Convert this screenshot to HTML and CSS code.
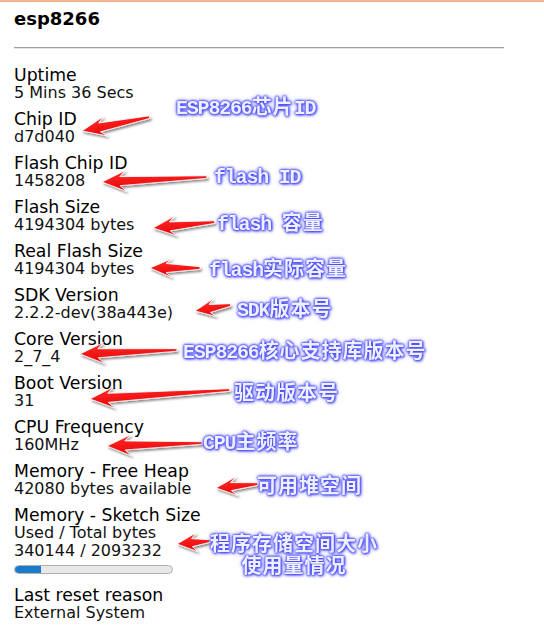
FILE: index.html
```html
<!DOCTYPE html>
<html>
<head>
<meta charset="utf-8">
<link rel="stylesheet" href="styles.css">
</head>
<body>
<div class="page">
  <div class="topline"></div>
  <div class="content">
    <h1 class="title">esp8266</h1>
    <hr class="rule">
    <div class="list">
      <div class="item"><div class="label">Uptime</div><div class="value">5 Mins 36 Secs</div></div>
      <div class="item"><div class="label">Chip ID</div><div class="value">d7d040</div></div>
      <div class="item"><div class="label">Flash Chip ID</div><div class="value">1458208</div></div>
      <div class="item"><div class="label">Flash Size</div><div class="value">4194304 bytes</div></div>
      <div class="item"><div class="label">Real Flash Size</div><div class="value">4194304 bytes</div></div>
      <div class="item"><div class="label">SDK Version</div><div class="value">2.2.2-dev(38a443e)</div></div>
      <div class="item"><div class="label">Core Version</div><div class="value">2_7_4</div></div>
      <div class="item"><div class="label">Boot Version</div><div class="value">31</div></div>
      <div class="item"><div class="label">CPU Frequency</div><div class="value">160MHz</div></div>
      <div class="item"><div class="label">Memory - Free Heap</div><div class="value">42080 bytes available</div></div>
      <div class="item"><div class="label">Memory - Sketch Size</div><div class="value">Used / Total bytes</div><div class="value">340144 / 2093232</div>
        <div class="bar"><div class="fill" style="width:16.25%"></div></div>
      </div>
      <div class="item"><div class="label">Last reset reason</div><div class="value">External System</div></div>
    </div>
  </div>

  <svg class="arrows" width="544" height="634" viewBox="0 0 544 634">
    <defs>
      <linearGradient id="red" x1="0" y1="0" x2="0" y2="1">
        <stop offset="0" stop-color="#ff3030"/>
        <stop offset="1" stop-color="#e80000"/>
      </linearGradient>
      <filter id="sh" x="-20%" y="-50%" width="140%" height="200%">
        <feDropShadow dx="1.5" dy="2" stdDeviation="1.3" flood-color="#000" flood-opacity="0.45"/>
      </filter>
    </defs>
    <g fill="url(#red)" stroke="#fff" stroke-width="0.8" filter="url(#sh)">
      <path transform="translate(82,131) rotate(-11.6)" d="M0,0 L24,-10 L18,-4.5 L69,-1.3 L69,1.3 L18,4.5 L24,10 Z"/>
      <path transform="translate(102,182) rotate(-2.7)" d="M0,0 L24,-10.5 L18,-4.5 L105,-1.3 L105,1.3 L18,4.5 L24,10.5 Z"/>
      <path transform="translate(153,228) rotate(-5.5)" d="M0,0 L23,-10 L17,-4.5 L62,-1.3 L62,1.3 L17,4.5 L23,10 Z"/>
      <path transform="translate(150,268) rotate(0)" d="M0,0 L22,-9.5 L16,-4.5 L50,-1.3 L50,1.3 L16,4.5 L22,9.5 Z"/>
      <path transform="translate(195,311) rotate(-9.7)" d="M0,0 L20,-9 L15,-4 L36,-1.3 L36,1.3 L15,4 L20,9 Z"/>
      <path transform="translate(80,354) rotate(-2.4)" d="M0,0 L24,-10.5 L18,-4.5 L97,-1.3 L97,1.3 L18,4.5 L24,10.5 Z"/>
      <path transform="translate(90,399) rotate(-3.7)" d="M0,0 L24,-10.5 L18,-4.5 L140,-1.3 L140,1.3 L18,4.5 L24,10.5 Z"/>
      <path transform="translate(107,446) rotate(-1.8)" d="M0,0 L24,-10.5 L18,-4.5 L95,-1.3 L95,1.3 L18,4.5 L24,10.5 Z"/>
      <path transform="translate(216,488) rotate(-5.4)" d="M0,0 L21,-9.5 L15,-4 L42,-1.3 L42,1.3 L15,4 L21,9.5 Z"/>
      <path transform="translate(177,544) rotate(-5.2)" d="M0,0 L20,-9.5 L15,-4 L33,-1.3 L33,1.3 L15,4 L20,9.5 Z"/>
    </g>
  </svg>

  <div class="note n1"><span class="lat">ESP8266</span>芯片<span class="lat">ID</span></div>
  <div class="note n2"><span class="lat">flash ID</span></div>
  <div class="note n3"><span class="lat">flash </span>容量</div>
  <div class="note n4"><span class="lat">flash</span>实际容量</div>
  <div class="note n5"><span class="lat">SDK</span>版本号</div>
  <div class="note n6"><span class="lat">ESP8266</span>核心支持库版本号</div>
  <div class="note n7">驱动版本号</div>
  <div class="note n8"><span class="lat">CPU</span>主频率</div>
  <div class="note n9">可用堆空间</div>
  <div class="note n10"><div class="ln">程序存储空间大小</div><div class="ln">使用量情况</div></div>
</div>
</body>
</html>
```

FILE: styles.css
```css
html, body {
  margin: 0;
  padding: 0;
  background: #fff;
}
.page {
  position: relative;
  width: 544px;
  height: 634px;
  overflow: hidden;
  font-family: "DejaVu Sans", Verdana, sans-serif;
  color: #000;
}
.topline {
  height: 2px;
  background: #f2b48a;
}
.content {
  padding: 0 0 0 14px;
  width: 490px;
}
.title {
  margin: 6px 0 0 0;
  font-size: 18px;
  line-height: 22px;
  font-weight: bold;
}
.rule {
  margin: 17px 0 0 0;
  border: 0;
  border-top: 1px solid #a0a0a0;
  border-bottom: 1px solid #e4e4e4;
  height: 0;
}
.list {
  margin-top: 17px;
  display: flex;
  flex-direction: column;
  gap: 8px;
}
.item {
  display: flex;
  flex-direction: column;
}
.label {
  font-size: 17.3px;
  line-height: 18px;
}
.value {
  font-size: 16px;
  line-height: 18px;
  color: #111;
}
.bar {
  margin: 5px 0 4px 0;
  width: 157px;
  height: 7px;
  border: 1px solid #b0b0b0;
  border-radius: 5px;
  background: #e8e8e8;
  overflow: hidden;
}
.fill {
  height: 100%;
  background: #1a7acb;
  border-radius: 4px 0 0 4px;
}
.arrows {
  position: absolute;
  left: 0;
  top: 0;
  pointer-events: none;
}
.note {
  position: absolute;
  font-family: "Noto Sans CJK SC", "Liberation Serif", serif;
  font-weight: bold;
  font-size: 20px;
  letter-spacing: 1px;
  line-height: 22px;
  color: #eef0ff;
  white-space: nowrap;
  text-shadow: 0 0 2px #4848ff, 0 0 2px #4848ff, 0 0 3px #5a5aff, 1px 1px 3px #3c3cf0, 0 0 5px #8080ff;
}
.lat {
  font-family: "Liberation Mono", monospace;
  font-size: 20px;
  letter-spacing: -1.2px;
}
.n1 { left: 176px; top: 95px; }
.n2 { left: 214px; top: 164px; }
.n3 { left: 217px; top: 211px; }
.n4 { left: 209px; top: 257px; }
.n5 { left: 237px; top: 297px; }
.n6 { left: 183px; top: 339px; }
.n7 { left: 234px; top: 381px; }
.n8 { left: 203px; top: 430px; }
.n9 { left: 257px; top: 474px; }
.n10 {
  left: 210px;
  top: 532px;
  display: flex;
  flex-direction: column;
  align-items: center;
}
```
